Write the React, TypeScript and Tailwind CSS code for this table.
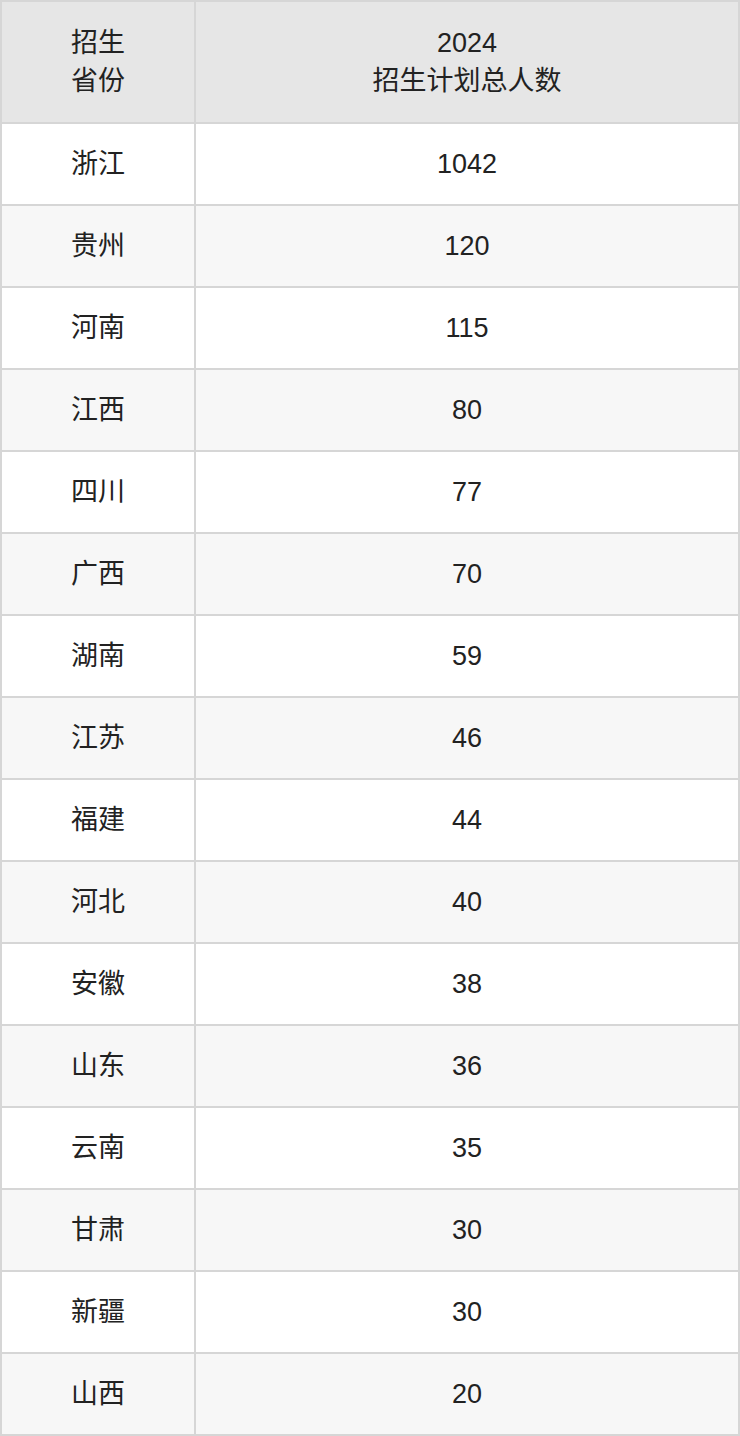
const rows: [string, string][] = [
  ['浙江', '1042'],
  ['贵州', '120'],
  ['河南', '115'],
  ['江西', '80'],
  ['四川', '77'],
  ['广西', '70'],
  ['湖南', '59'],
  ['江苏', '46'],
  ['福建', '44'],
  ['河北', '40'],
  ['安徽', '38'],
  ['山东', '36'],
  ['云南', '35'],
  ['甘肃', '30'],
  ['新疆', '30'],
  ['山西', '20'],
];

export default function App() {
  return (
    <div
      className="w-[740px] bg-white text-[27px] text-[#222222]"
      style={{ fontFamily: '"Liberation Sans", "Noto Sans CJK SC", sans-serif' }}
    >
      <div className="border-2 border-[#d6d6d6]">
        <div className="flex h-[120px] bg-[#e6e6e6] leading-[38px]">
          <div className="flex w-[194px] items-center justify-center border-r-2 border-[#d6d6d6] text-center">
            招生
            <br />
            省份
          </div>
          <div className="flex flex-1 items-center justify-center text-center">
            2024
            <br />
            招生计划总人数
          </div>
        </div>
        {rows.map(([prov, num], i) => (
          <div
            key={prov + i}
            className={`flex h-[82px] border-t-2 border-[#d6d6d6] ${i % 2 === 1 ? 'bg-[#f7f7f7]' : 'bg-white'}`}
          >
            <div className="flex w-[194px] items-center justify-center border-r-2 border-[#d6d6d6]">{prov}</div>
            <div className="flex flex-1 items-center justify-center">{num}</div>
          </div>
        ))}
      </div>
    </div>
  );
}
